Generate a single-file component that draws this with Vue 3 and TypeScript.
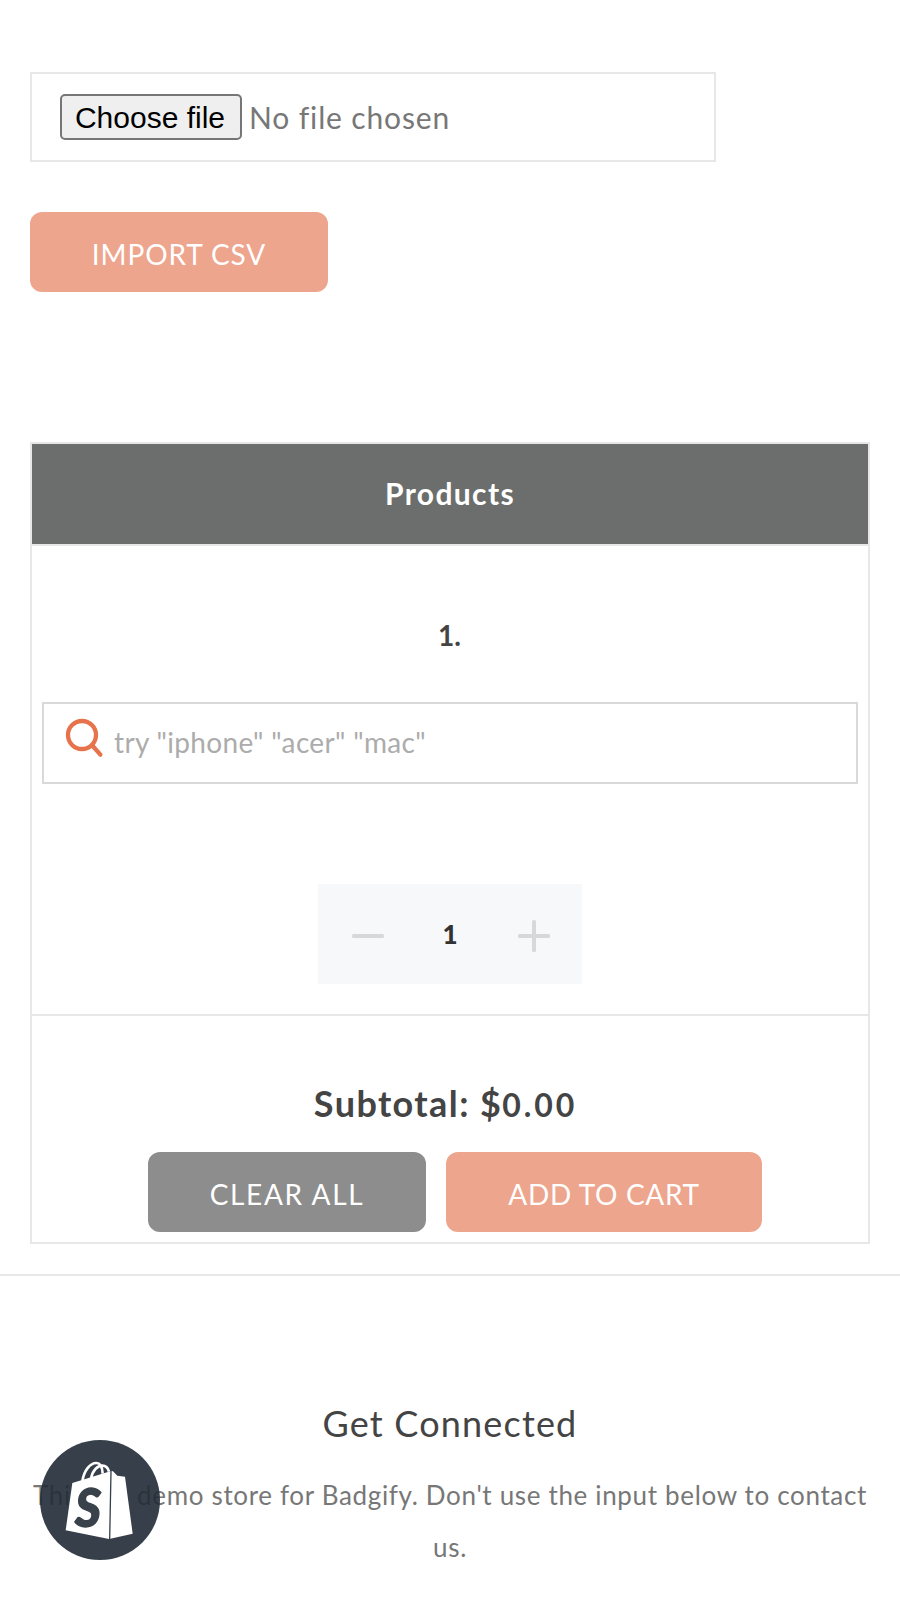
<script setup lang="ts">
import { computed, ref } from 'vue'

const query = ref('')
const quantity = ref(1)
const subtotal = ref(0)
const subtotalDigits = computed(() => subtotal.value.toFixed(2))

function decrease() {
  if (quantity.value > 1) quantity.value--
}
function increase() {
  quantity.value++
}
function clearAll() {
  query.value = ''
  quantity.value = 1
  subtotal.value = 0
}
</script>

<template>
  <div class="page">
    <section class="import">
      <div class="file-field">
        <button type="button" class="file-button">Choose file</button>
        <span class="file-status">No file chosen</span>
      </div>
      <button type="button" class="btn btn-accent btn-import">IMPORT CSV</button>
    </section>

    <section class="order">
      <header class="order-head">Products</header>

      <div class="order-row">
        <div class="row-number">1.</div>
        <label class="search">
          <svg class="search-icon" viewBox="0 0 40 42" aria-hidden="true">
            <circle cx="18" cy="18" r="14" />
            <path d="M27.8 28 L36.4 37.6" />
          </svg>
          <input v-model="query" class="search-input" type="text" placeholder="try &quot;iphone&quot; &quot;acer&quot; &quot;mac&quot;" />
        </label>
        <div class="quantity">
          <button type="button" class="step" aria-label="Decrease" @click="decrease">
            <svg viewBox="0 0 32 32"><rect y="14" width="32" height="4" rx="1.6" /></svg>
          </button>
          <span class="quantity-value">{{ quantity }}</span>
          <button type="button" class="step" aria-label="Increase" @click="increase">
            <svg viewBox="0 0 32 32">
              <rect y="14" width="32" height="4" rx="1.6" />
              <rect x="14" width="4" height="32" rx="1.6" />
            </svg>
          </button>
        </div>
      </div>

      <div class="order-foot">
        <div class="subtotal">Subtotal: $<span class="digits">{{ subtotalDigits }}</span></div>
        <div class="actions">
          <button type="button" class="btn btn-muted btn-clear" @click="clearAll">CLEAR ALL</button>
          <button type="button" class="btn btn-accent btn-cart">ADD TO CART</button>
        </div>
      </div>
    </section>

    <footer class="footer">
      <h2 class="footer-title">Get Connected</h2>
      <p class="footer-text">This is a demo store for Badgify. Don't use the input below to contact<br />us.</p>
    </footer>

    <a class="store-badge" aria-label="Shopify">
      <svg viewBox="0 0 360 360" aria-hidden="true">
        <g class="handles">
          <path d="M127 124 C132 92 150 69 169 69 C180 69 187 80 188 101" />
          <path d="M153 116 C158 90 173 77 187 77 C198 77 204 84 207 95" />
        </g>
        <path class="bag" d="M97 129 L211 94 L207 297 L77 271 Z" />
        <path class="bag" d="M215 93 L219 94 L232 107 L255 110 L278 281 L211 296 Z" />
        <text class="mark" x="105" y="260" textLength="78" lengthAdjust="spacingAndGlyphs">S</text>
      </svg>
    </a>
  </div>
</template>

<style>
html,
body {
  margin: 0;
  background: #fff;
  overflow: hidden;
}
</style>

<style scoped>
.page {
  box-sizing: border-box;
  height: 1600px;
  overflow: hidden;
  padding-top: 72px;
  background: #fff;
  color: #444;
  font-family: Lato, "Open Sans", sans-serif;
}
.page * {
  box-sizing: border-box;
}
button {
  margin: 0;
  padding: 0;
  border: 0;
  font-family: inherit;
}
.import {
  height: 370px;
  padding: 0 30px;
}
.file-field {
  display: flex;
  align-items: center;
  width: 686px;
  height: 90px;
  margin-bottom: 50px;
  padding: 0 28px;
  border: 2px solid #e7e7e7;
}
.file-button {
  width: 182px;
  height: 46px;
  padding: 2px 2px 0 0;
  border: 2px solid #767676;
  border-radius: 5px;
  background: #efefef;
  color: #000;
  font: 30px/40px "Liberation Sans", Arial, sans-serif;
}
.file-status {
  margin-left: 7px;
  color: #777;
  font-size: 30px;
  line-height: 42px;
  letter-spacing: 0.86px;
}
.btn {
  height: 80px;
  padding-top: 4px;
  border-radius: 12px;
  color: #fff;
  font-size: 28px;
}
.btn-accent {
  background: #eda58e;
}
.btn-muted {
  background: #8d8d8d;
}
.btn-import {
  display: block;
  width: 298px;
  letter-spacing: 0.9px;
}
.btn-clear {
  width: 278px;
  letter-spacing: 1.65px;
}
.btn-cart {
  width: 316px;
  letter-spacing: 0.65px;
}
.order {
  height: 802px;
  margin: 0 30px 30px;
  border: 2px solid #e7e7e7;
}
.order-head {
  height: 102px;
  border-bottom: 2px solid #e7e7e7;
  background: #6c6e6d;
  color: #fff;
  font-size: 30px;
  font-weight: 700;
  line-height: 98px;
  letter-spacing: 1.35px;
  text-align: center;
}
.order-row {
  height: 470px;
  padding: 69px 10px 0;
  border-bottom: 2px solid #e7e7e7;
}
.row-number {
  height: 40px;
  margin-bottom: 47px;
  padding-right: 1px;
  font-size: 28px;
  font-weight: 700;
  line-height: 40px;
  text-align: center;
}
.search {
  display: flex;
  align-items: center;
  height: 82px;
  margin-bottom: 100px;
  padding: 0 20px;
  border: 2px solid #d9d9d9;
}
.search-icon {
  width: 40px;
  height: 42px;
  margin-top: -11px;
  fill: none;
  stroke: #e6734c;
  stroke-width: 4.3;
  stroke-linecap: round;
}
.search-input {
  flex: 1;
  height: 40px;
  margin: -2px 0 0 10px;
  padding: 0;
  border: 0;
  outline: 0;
  background: transparent;
  color: #444;
  font: 28px/40px Lato, "Open Sans", sans-serif;
  letter-spacing: 0.34px;
}
.search-input::placeholder {
  color: #acacac;
  opacity: 1;
}
.quantity {
  display: flex;
  align-items: center;
  justify-content: space-between;
  width: 264px;
  height: 100px;
  margin: 0 auto;
  padding: 4px 32px 0 34px;
  background: #f7f8fa;
}
.step {
  width: 32px;
  height: 32px;
  background: none;
}
.step svg {
  display: block;
  fill: #d8d8d8;
}
.quantity-value {
  margin: -4px 2px 0 0;
  color: #333;
  font-size: 26px;
  font-weight: 900;
}
.order-foot {
  padding-top: 67px;
}
.subtotal {
  height: 40px;
  margin-bottom: 29px;
  padding-right: 9px;
  font-size: 36px;
  font-weight: 700;
  line-height: 40px;
  letter-spacing: 1.4px;
  text-align: center;
}
.digits {
  font-size: 32px;
  line-height: 1;
  letter-spacing: 2.9px;
}
.actions {
  display: flex;
  justify-content: center;
  gap: 20px;
  padding-left: 10px;
}
.footer {
  height: 326px;
  padding-top: 125px;
  border-top: 2px solid #e7e7e7;
  text-align: center;
}
.footer-title {
  margin: 0 0 24px;
  font-size: 36px;
  font-weight: 400;
  line-height: 44px;
  letter-spacing: 1.18px;
}
.footer-text {
  margin: 0;
  color: #777;
  font-size: 26px;
  line-height: 52px;
  letter-spacing: 0.66px;
  white-space: nowrap;
}
.store-badge {
  position: absolute;
  top: 1440px;
  left: 40px;
  width: 120px;
  height: 120px;
  border-radius: 50%;
  background: rgba(33, 43, 54, 0.9);
}
.store-badge svg {
  display: block;
}
.handles {
  fill: none;
  stroke: #fff;
  stroke-width: 8;
}
.bag {
  fill: #fff;
}
.mark {
  fill: #39414a;
  stroke: #39414a;
  stroke-width: 4;
  font: italic 900 158px Lato, sans-serif;
}
</style>
